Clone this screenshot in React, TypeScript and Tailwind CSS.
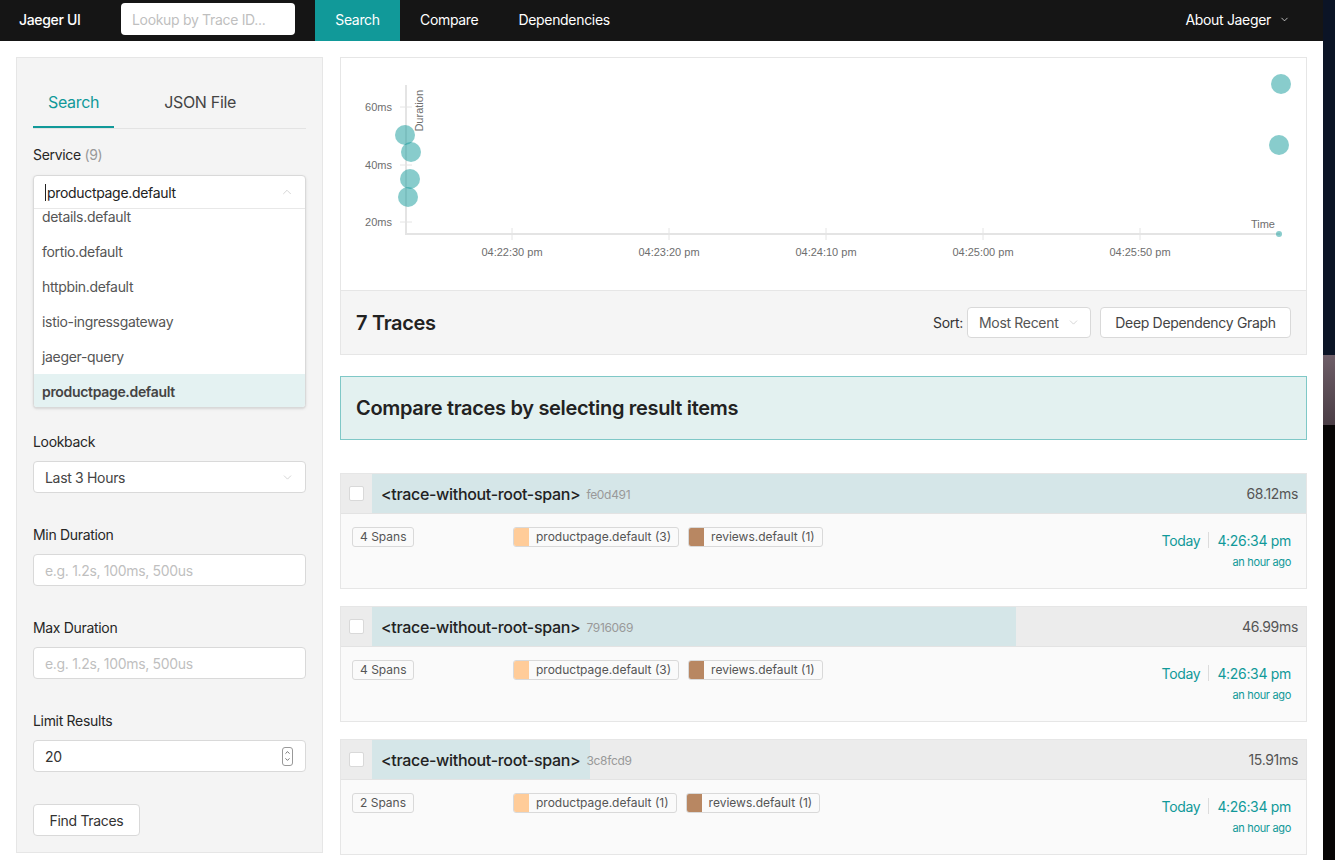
import React from "react";
import { ChevronDown, ChevronUp } from "lucide-react";

const services = [
  "details.default",
  "fortio.default",
  "httpbin.default",
  "istio-ingressgateway",
  "jaeger-query",
  "productpage.default",
];

const traces = [
  { id: "fe0d491", duration: 68.12, spans: 4, pp: 3, rv: 1 },
  { id: "7916069", duration: 46.99, spans: 4, pp: 3, rv: 1 },
  { id: "3c8fcd9", duration: 15.91, spans: 2, pp: 1, rv: 1 },
];

const maxDuration = 68.12;

const TopNav = () => (
  <nav className="flex h-[41px] items-center bg-[#151515] pb-[3px] text-[14px] text-white">
    <div className="w-[121px] pl-[19px] font-medium">Jaeger UI</div>
    <div className="flex h-[32px] w-[174px] items-center rounded-[4px] bg-white pl-[11px] text-[#bfbfbf]">
      Lookup by Trace ID...
    </div>
    <div className="-mb-[3px] ml-[20px] flex h-[41px] w-[85px] items-center justify-center bg-[#119999] pb-[3px]">
      Search
    </div>
    <div className="flex h-full items-center px-5">Compare</div>
    <div className="flex h-full items-center px-5">Dependencies</div>
    <div className="ml-auto flex items-center gap-[8px] pr-[33px]">
      About Jaeger
      <ChevronDown size={11} strokeWidth={1.5} className="mt-[1px]" />
    </div>
  </nav>
);

const Label = ({ children, className = "" }: { children: React.ReactNode; className?: string }) => (
  <div className={`h-[22px] text-[14px] leading-[22px] text-[#262626] ${className}`}>{children}</div>
);

const TextInput = ({ value, placeholder }: { value?: string; placeholder?: string }) => (
  <div className="mt-[8px] flex h-[32px] items-center rounded-[4px] border border-[#d9d9d9] bg-white px-[11px] text-[14px]">
    {value ? <span className="text-[#333]">{value}</span> : <span className="text-[#bfbfbf]">{placeholder}</span>}
  </div>
);

const SearchForm = () => (
  <aside className="h-[796px] w-[307px] shrink-0 border border-[#e6e6e6] bg-[#f4f4f4] px-4 pt-[21px]">
    <div className="flex border-b border-[#e3e3e3] text-[16px]">
      <div className="border-b-2 border-[#119999] px-[15px] pt-[11px] pb-[12px] text-[#119999]">Search</div>
      <div className="ml-[34px] px-[16px] pt-[11px] pb-[12px] text-[#444]">JSON File</div>
    </div>

    <Label className="mt-[15px]">
      Service <span className="text-[#999]">(9)</span>
    </Label>
    {/* select with its open menu */}
    <div className="mt-[9px] overflow-hidden rounded-[4px] border border-[#d9d9d9] bg-white shadow-sm">
      <div className="flex h-[33px] items-center border-b border-[#e8e8e8] px-[11px] text-[14px] text-[#222]">
        <span className="mr-[1px] h-[17px] w-px bg-[#222]" />
        productpage.default
        <ChevronUp size={14} strokeWidth={1.2} className="ml-auto text-[#c4c4c4]" />
      </div>
      <div className="h-[198px] overflow-hidden">
        <div className="mt-[-10px]">
          {services.map((s) => (
            <div
              key={s}
              className={`flex h-[35px] items-center px-[8px] text-[14px] ${
                s === "productpage.default" ? "bg-[#e4f2f2] font-semibold text-[#444]" : "text-[#555]"
              }`}
            >
              {s}
            </div>
          ))}
        </div>
      </div>
    </div>

    <Label className="mt-[23px]">Lookback</Label>
    <div className="mt-[8px] flex h-[32px] items-center rounded-[4px] border border-[#d9d9d9] bg-white px-[11px] text-[14px] text-[#444]">
      Last 3 Hours
      <ChevronDown size={13} strokeWidth={1.2} className="ml-auto text-[#bfbfbf]" />
    </div>

    <Label className="mt-[31px]">Min Duration</Label>
    <TextInput placeholder="e.g. 1.2s, 100ms, 500us" />

    <Label className="mt-[31px]">Max Duration</Label>
    <TextInput placeholder="e.g. 1.2s, 100ms, 500us" />

    <Label className="mt-[31px]">Limit Results</Label>
    <div className="mt-[8px] flex h-[32px] items-center rounded-[4px] border border-[#d9d9d9] bg-white pl-[11px] pr-[12px] text-[14px] text-[#333]">
      20
      <div className="ml-auto flex h-[19px] w-[11px] flex-col items-center justify-center rounded-[3px] border border-[#999]">
        <ChevronUp size={7} strokeWidth={2.5} className="text-[#444]" />
        <ChevronDown size={7} strokeWidth={2.5} className="text-[#444]" />
      </div>
    </div>

    <div className="mt-[32px] flex h-[32px] w-[107px] items-center justify-center rounded-[4px] border border-[#d9d9d9] bg-white text-[14px] text-[#333]">
      Find Traces
    </div>
  </aside>
);

const TraceChart = () => {
  const axis = "#e4e4e4";
  const label = "#6e6e6e";
  const timeTicks = [
    { x: 171, t: "04:22:30 pm" },
    { x: 328, t: "04:23:20 pm" },
    { x: 485, t: "04:24:10 pm" },
    { x: 642, t: "04:25:00 pm" },
    { x: 799, t: "04:25:50 pm" },
  ];
  const yTicks = [
    { y: 49, t: "60ms" },
    { y: 107, t: "40ms" },
    { y: 164, t: "20ms" },
  ];
  const dots = [
    { x: 64, y: 77, r: 10 },
    { x: 70, y: 94, r: 10 },
    { x: 69, y: 121, r: 10 },
    { x: 67, y: 139, r: 10 },
    { x: 940, y: 26, r: 10 },
    { x: 938, y: 87, r: 10 },
    { x: 938, y: 176, r: 3 },
  ];
  return (
    <svg
      width="965"
      height="232"
      className="block tracking-normal"
      style={{ fontFamily: "'Liberation Sans', Arial, sans-serif" }}
    >
      <line x1="65" y1="27" x2="65" y2="177" stroke={axis} strokeWidth="2" />
      <line x1="64" y1="176" x2="939" y2="176" stroke={axis} strokeWidth="2" />
      {yTicks.map((t) => (
        <g key={t.t}>
          <line x1="59" y1={t.y} x2="71" y2={t.y} stroke={axis} strokeWidth="1" />
          <text x="51" y={t.y + 4} textAnchor="end" fontSize="11" fill={label}>
            {t.t}
          </text>
        </g>
      ))}
      {timeTicks.map((t) => (
        <g key={t.t}>
          <line x1={t.x} y1="170" x2={t.x} y2="182" stroke={axis} strokeWidth="1" />
          <text x={t.x} y="198" textAnchor="middle" fontSize="11" fill={label}>
            {t.t}
          </text>
        </g>
      ))}
      <text transform="translate(82,32) rotate(-90)" textAnchor="end" fontSize="11" fill={label}>
        Duration
      </text>
      <text x="934" y="170" textAnchor="end" fontSize="11" fill={label}>
        Time
      </text>
      {dots.map((d, i) => (
        <circle key={i} cx={d.x} cy={d.y} r={d.r} fill="#119999" fillOpacity="0.5" />
      ))}
    </svg>
  );
};

const ServiceTag = ({ color, name }: { color: string; name: string }) => (
  <div className="flex h-[20px] items-stretch overflow-hidden rounded-[3px] border border-[#d9d9d9] bg-[#fafafa] text-[12px] tracking-normal text-[#555]">
    <span className="w-[15px]" style={{ backgroundColor: color }} />
    <span className="flex items-center pl-[7px] pr-[7px]">{name}</span>
  </div>
);

const TraceItem = ({ t }: { t: (typeof traces)[number] }) => (
  <div className="border border-[#e6e6e6]">
    <div className="flex h-[40px] border-b border-[#e3e3e3] bg-[#ececec]">
      <div className="flex w-[31px] items-center justify-center">
        <span className="h-[15px] w-[15px] rounded-[2px] border border-[#d9d9d9] bg-white" />
      </div>
      <div className="relative flex flex-1 items-center">
        <div className="absolute inset-y-0 left-0 bg-[#d5e6e8]" style={{ width: `${(t.duration / maxDuration) * 100}%` }} />
        <span className="relative ml-[9px] text-[16px] font-medium text-[#222]">&lt;trace-without-root-span&gt;</span>
        <span className="relative ml-[6px] mt-[2px] text-[12px] text-[#999]">{t.id}</span>
        <span className="relative ml-auto mr-[8px] text-[14px] text-[#555]">{t.duration}ms</span>
      </div>
    </div>
    <div className="flex h-[74px] items-start bg-[#fafafa] pl-[11px] pr-[15px] pt-[13px]">
      <div className="flex w-[161px]">
        <div className="flex h-[20px] items-center rounded-[3px] border border-[#d9d9d9] bg-[#fafafa] px-[7px] text-[12px] tracking-normal text-[#555]">
          {t.spans} Spans
        </div>
      </div>
      <div className="flex gap-[9px]">
        <ServiceTag color="#ffcc99" name={`productpage.default (${t.pp})`} />
        <ServiceTag color="#b88762" name={`reviews.default (${t.rv})`} />
      </div>
      <div className="ml-auto mt-[3px] flex flex-col items-end text-[#119999]">
        <div className="flex h-[20px] items-center text-[14px]">
          Today
          <span className="mx-[8px] h-[16px] w-px bg-[#dcdcdc]" />
          4:26:34 pm
        </div>
        <div className="mt-[4px] text-[11px]">an hour ago</div>
      </div>
    </div>
  </div>
);

const Results = () => (
  <section className="w-[967px] shrink-0">
    <div className="border border-[#e6e6e6] bg-white">
      <div className="h-[232px]">
        <TraceChart />
      </div>
      <div className="flex h-[64px] items-center border-t border-[#e6e6e6] bg-[#f5f5f5] pl-[15px] pr-[15px]">
        <div className="text-[20px] font-semibold text-[#222]">7 Traces</div>
        <div className="ml-auto mr-[4px] text-[14px] text-[#333]">Sort:</div>
        <div className="flex h-[31px] w-[124px] items-center rounded-[4px] border border-[#d9d9d9] bg-white pl-[11px] pr-[10px] text-[14px] text-[#555]">
          Most Recent
          <ChevronDown size={13} strokeWidth={1.2} className="ml-auto text-[#bfbfbf]" />
        </div>
        <div className="ml-[9px] flex h-[31px] w-[191px] items-center justify-center rounded-[4px] border border-[#d9d9d9] bg-white text-[14px] text-[#444]">
          Deep Dependency Graph
        </div>
      </div>
    </div>

    <div className="mt-[21px] flex h-[64px] items-center border border-[#7fc8c7] bg-[#e3f1f0] px-[15px] text-[20px] font-semibold text-[#222]">
      Compare traces by selecting result items
    </div>

    <div className="mt-[33px] flex flex-col gap-[17px]">
      {traces.map((t) => (
        <TraceItem key={t.id} t={t} />
      ))}
    </div>
  </section>
);

export default function App() {
  return (
    <div className="flex h-[860px] w-[1335px] overflow-hidden font-['Inter',sans-serif] tracking-[-0.02em]">
      <div className="flex w-[1323px] shrink-0 flex-col bg-white">
        <TopNav />
        <div className="flex gap-[17px] px-4 pt-4">
          <SearchForm />
          <Results />
        </div>
      </div>
      <div className="flex w-[12px] flex-col">
        <div className="h-[355px] bg-[#0b1426]" />
        <div className="h-[70px] bg-gradient-to-b from-[#6e5e68] to-[#4a3d45]" />
        <div className="flex-1 bg-[#070505]" />
      </div>
    </div>
  );
}
